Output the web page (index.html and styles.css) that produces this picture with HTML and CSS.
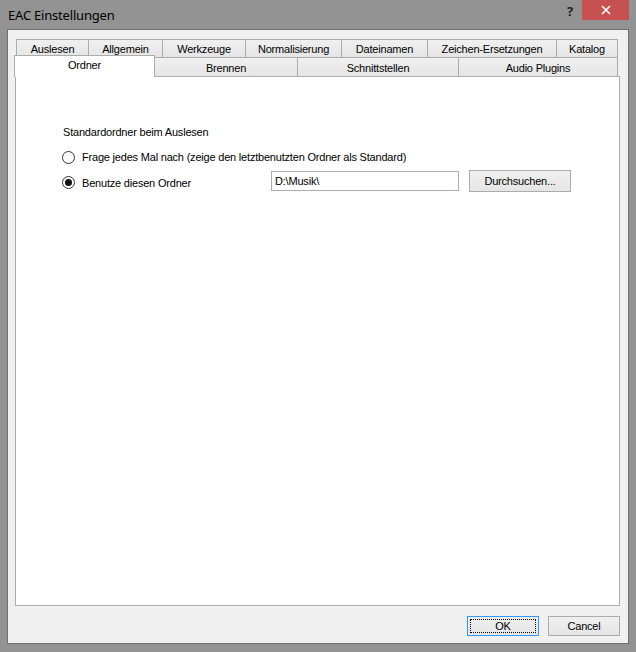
FILE: index.html
```html
<!DOCTYPE html>
<html>

<head>
  <meta charset="UTF-8">
  <link rel="stylesheet" href="styles.css">
</head>

<body>
  <div class="window">
    <div class="titlebar">
      <span class="title">EAC Einstellungen</span>
      <span class="help">?</span>
      <span class="close">
        <svg width="10" height="10" viewBox="0 0 10 10">
          <path d="M1 1 L9 9 M9 1 L1 9" stroke="#fff" stroke-width="1.6" />
        </svg>
      </span>
    </div>
    <div class="client">
      <div class="tabs">
        <div class="tab-row row-top">
          <div class="tab">Auslesen</div>
          <div class="tab">Allgemein</div>
          <div class="tab">Werkzeuge</div>
          <div class="tab">Normalisierung</div>
          <div class="tab">Dateinamen</div>
          <div class="tab">Zeichen-Ersetzungen</div>
          <div class="tab last">Katalog</div>
        </div>
        <div class="tab-row row-bottom">
          <div class="tab selected">Ordner</div>
          <div class="tab">Brennen</div>
          <div class="tab">Schnittstellen</div>
          <div class="tab last">Audio Plugins</div>
        </div>
      </div>
      <div class="page">
        <p class="group-label">Standardordner beim Auslesen</p>
        <div class="option">
          <span class="radio"></span>
          <span>Frage jedes Mal nach (zeige den letztbenutzten Ordner als Standard)</span>
        </div>
        <div class="option option-folder">
          <div class="option-label">
            <span class="radio checked"></span>
            <span>Benutze diesen Ordner</span>
          </div>
          <div class="textbox">D:\Musik\</div>
          <div class="button browse">Durchsuchen...</div>
        </div>
      </div>
      <div class="footer">
        <div class="button default"><span class="focus">OK</span></div>
        <div class="button">Cancel</div>
      </div>
    </div>
  </div>
</body>

</html>
```

FILE: styles.css
```css
* {
  box-sizing: border-box;
}

body {
  margin: 0;
  font-family: "Liberation Sans", Arial, sans-serif;
  font-size: 11px;
  letter-spacing: -0.2px;
  color: #000;
}

.window {
  width: 636px;
  height: 652px;
  background-color: #939393;
  display: flex;
  flex-direction: column;
}

.titlebar {
  height: 29px;
  display: flex;
  align-items: flex-start;
}

.title {
  font-family: "Noto Sans", sans-serif;
  font-size: 13px;
  letter-spacing: -0.2px;
  padding: 6px 0 0 8px;
  flex: 1;
}

.help {
  font-family: "Noto Sans", sans-serif;
  font-weight: bold;
  font-size: 13px;
  color: #222;
  padding-top: 2px;
  margin-right: 9px;
}

.close {
  width: 47px;
  height: 20px;
  background-color: #c75050;
  margin-right: 7px;
  display: flex;
  align-items: center;
  justify-content: center;
}

.client {
  flex: 1;
  margin: 0 7px 8px 7px;
  border: 1px solid #707070;
  background-color: #f0f0f0;
  padding: 9px 8px 0 7px;
  display: flex;
  flex-direction: column;
}

.tabs {
  margin-left: 1px;
  width: 602px;
}

.tab-row {
  display: grid;
}

.row-top {
  height: 18px;
  grid-template-columns: 72px 74px 83px 96px 86px 129px 62px;
}

.row-bottom {
  height: 19px;
  grid-template-columns: 138px 143px 161px 160px;
}

.tab {
  border: 1px solid #acacac;
  border-right: none;
  border-bottom: none;
  background: linear-gradient(#f0f0f0, #e5e5e5);
  display: flex;
  align-items: center;
  justify-content: center;
  padding-top: 1px;
  white-space: nowrap;
}

.tab.last {
  border-right: 1px solid #acacac;
}

.row-bottom .tab {
  padding-top: 2px;
}

.tab.selected {
  position: relative;
  z-index: 1;
  margin: -2px -1px -1px -2px;
  background: #fff;
  border-right: 1px solid #acacac;
  align-items: flex-start;
  padding-top: 3px;
}

.page {
  width: 605px;
  height: 530px;
  background-color: #fff;
  border: 1px solid #acacac;
  padding: 47px 0 0 46px;
}

.group-label {
  margin: 0 0 0 1px;
  line-height: 16px;
}

.option {
  display: flex;
  align-items: center;
  height: 16px;
  margin-top: 9px;
}

.radio {
  width: 13px;
  height: 13px;
  border: 1px solid #333;
  border-radius: 50%;
  background-color: #fff;
  margin-right: 7px;
  display: flex;
  align-items: center;
  justify-content: center;
}

.radio.checked:after {
  content: "";
  width: 7px;
  height: 7px;
  border-radius: 50%;
  background-color: #111;
}

.option-folder {
  height: 22px;
  margin-top: 5px;
}

.option-label {
  width: 209px;
  display: flex;
  align-items: center;
  padding-top: 3px;
}

.textbox {
  width: 188px;
  height: 20px;
  border: 1px solid #abadb3;
  background-color: #fff;
  padding: 3px 0 0 3px;
}

.button {
  width: 72px;
  height: 20px;
  border: 1px solid #acacac;
  background: linear-gradient(#f0f0f0, #e5e5e5);
  display: flex;
  align-items: center;
  justify-content: center;
}

.browse {
  width: 102px;
  height: 22px;
  margin-left: 10px;
}

.footer {
  display: flex;
  justify-content: flex-end;
  gap: 9px;
  margin-top: 10px;
}

.button.default {
  border-color: #3399ff;
  padding: 2px;
}

.focus {
  width: 100%;
  height: 100%;
  border: 1px dotted #000;
  display: flex;
  align-items: center;
  justify-content: center;
}
```
